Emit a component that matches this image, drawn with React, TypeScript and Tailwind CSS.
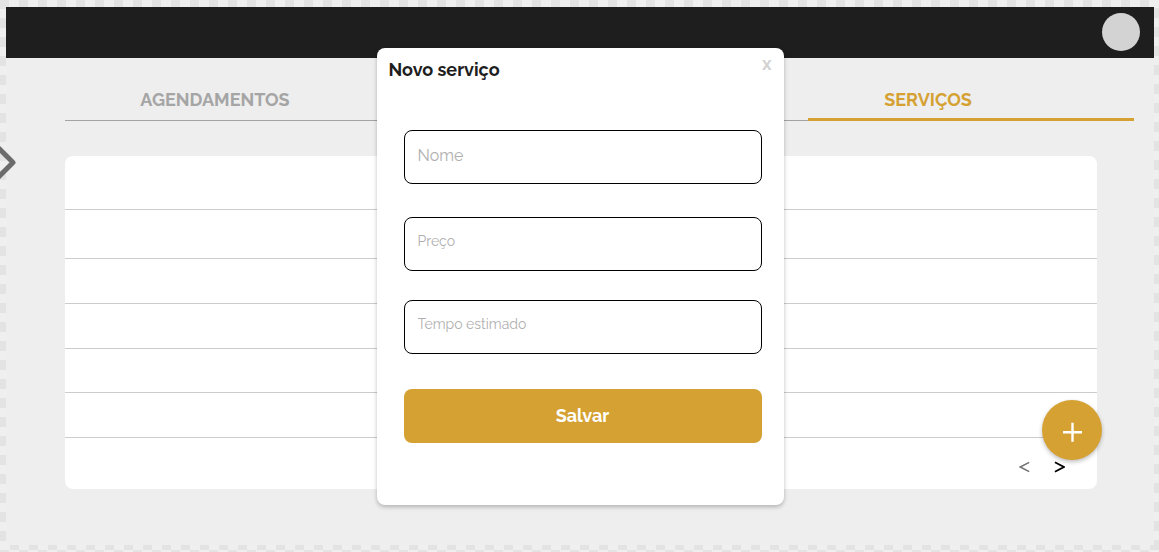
const rows = ["h-[54px]", "h-[49px]", "h-[45px]", "h-[45px]", "h-11", "h-[45px]"];

const fields = [
  { id: "nome", label: "Nome", style: "text-base pb-1 mb-[33px]" },
  { id: "preco", label: "Preço", style: "text-sm pb-1.5 mb-[29px]" },
  { id: "tempo", label: "Tempo estimado", style: "text-sm pb-1.5 mb-[35px]" },
];

function Tabs() {
  return (
    <nav className="ml-[59px] mr-5 mt-6 grid grid-cols-[300fr_443fr_326fr] border-b border-[#a3a3a3] text-lg leading-9 font-bold">
      <a href="#agendamentos" className="pb-[2px] text-center text-[#a5a5a5]">
        AGENDAMENTOS
      </a>
      <span />
      <a
        href="#servicos"
        className="-mb-px border-b-[3px] border-[#d5a132] pr-[86px] text-center text-[#d5a132]"
      >
        SERVIÇOS
      </a>
    </nav>
  );
}

function ServiceList() {
  return (
    <section className="relative mt-[35px] ml-[59px] mr-[57px] rounded-lg bg-white">
      <ul>
        {rows.map((height, i) => (
          <li key={i} className={`${height} border-b border-[#cccccc]`} />
        ))}
      </ul>
      <div className="flex h-[51px] items-center justify-end gap-6 pr-8 pt-1.5 text-black">
        <button aria-label="Página anterior" className="text-[#707070]">
          <svg width="11" height="12" viewBox="0 0 11 12" fill="none" stroke="currentColor" strokeWidth="1.5">
            <path d="M10.2 1.3 1.2 6l9 4.7" />
          </svg>
        </button>
        <button aria-label="Próxima página">
          <svg width="11" height="12" viewBox="0 0 11 12" fill="none" stroke="currentColor" strokeWidth="1.8">
            <path d="M.9 1.3 9.9 6l-9 4.7" />
          </svg>
        </button>
      </div>
      <button
        aria-label="Adicionar serviço"
        className="absolute -right-[5px] bottom-[29px] flex size-15 items-center justify-center rounded-full bg-[#d5a132] pt-1 text-white shadow-[0_2px_4px_rgba(0,0,0,0.25)]"
      >
        <svg width="20" height="20" viewBox="0 0 20 20" fill="none" stroke="currentColor" strokeWidth="2.4">
          <path d="M10.5 .8v19M1 10.3h19" />
        </svg>
      </button>
    </section>
  );
}

function ServiceDialog() {
  return (
    <div className="absolute inset-x-0 top-[41px] flex justify-center">
      <form
        role="dialog"
        aria-labelledby="dialog-title"
        className="flex w-full max-w-[407px] flex-col rounded-lg bg-white pb-[62px] shadow-[0_2px_4px_rgba(0,0,0,0.25)]"
        onSubmit={(e) => e.preventDefault()}
      >
        <header className="mb-[38px] flex h-11 items-start justify-between pr-3 pl-3">
          <h2 id="dialog-title" className="pt-2 text-lg leading-7 font-bold text-[#1e1e1e]">
            Novo serviço
          </h2>
          <button type="button" aria-label="Fechar" className="pt-1 text-lg leading-6 font-bold text-[#d3d3d3]">
            x
          </button>
        </header>
        <div className="flex flex-col pr-[22px] pl-[27px]">
          {fields.map((f) => (
            <input
              key={f.id}
              id={f.id}
              aria-label={f.label}
              placeholder={f.label}
              className={`${f.style} h-[54px] rounded-lg border border-black bg-white px-[13px] font-normal text-black outline-none placeholder:text-[#b0b0b0]`}
            />
          ))}
          <button type="submit" className="h-[54px] rounded-lg bg-[#d5a132] pb-px text-lg font-bold text-white">
            Salvar
          </button>
        </div>
      </form>
    </div>
  );
}

export default function App() {
  return (
    <div className="relative flex min-h-screen flex-col overflow-hidden bg-[#efefef] bg-[conic-gradient(#efefef_25%,#e3e3e3_0_50%,#efefef_0_75%,#e3e3e3_0)] bg-[length:19px_19px] bg-[position:0_-1px] pt-[7px] pr-[5px] pb-[7px] pl-[6px] font-['Raleway','Lato',sans-serif]">
      <main className="relative flex-1 bg-[#eeeeee] pb-14">
        <header className="flex h-[51px] items-center justify-end bg-[#1e1e1e] pr-[14px] pb-[2px]">
          <button aria-label="Perfil" className="size-[38px] rounded-full bg-[#d3d3d3]" />
        </header>
        <Tabs />
        <ServiceList />
        <ServiceDialog />
      </main>
      <svg
        className="absolute top-[142px] left-0"
        width="18"
        height="40"
        viewBox="0 0 18 40"
        fill="none"
        stroke="#6b6b6b"
        strokeWidth="5"
        strokeLinejoin="round"
        aria-hidden="true"
      >
        <path d="M-4 3.5 13 20.5-4 37.5" />
      </svg>
    </div>
  );
}
